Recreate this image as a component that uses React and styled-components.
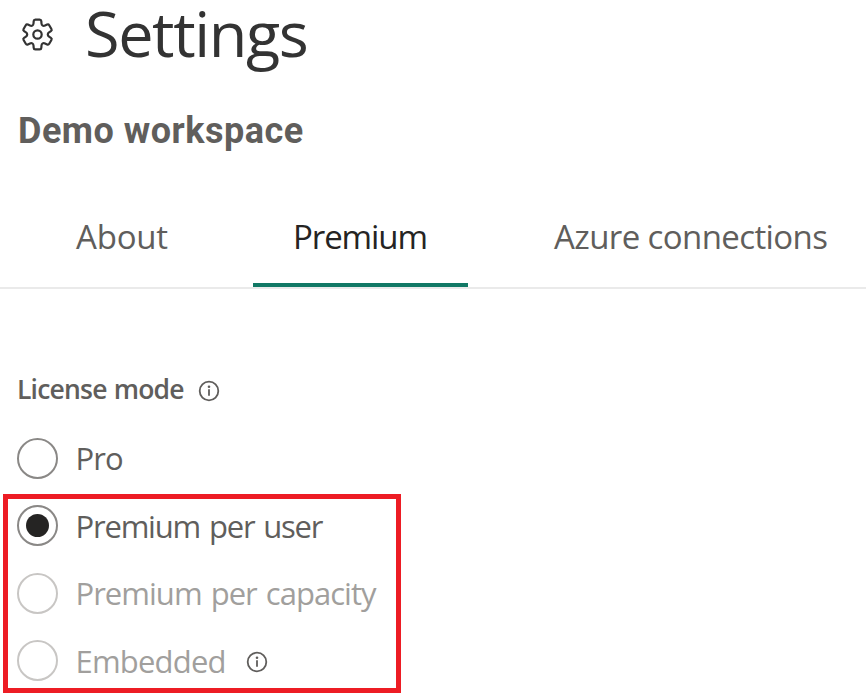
import React from 'react';
import styled, { createGlobalStyle } from 'styled-components';

const GlobalStyle = createGlobalStyle`
  *, *::before, *::after { box-sizing: border-box; }
  body {
    margin: 0;
    background: #fff;
    font-family: "Open Sans", "Noto Sans", sans-serif;
  }
`;

const Panel = styled.main`
  display: flex;
  flex-direction: column;
  height: 700px;
`;

const Header = styled.header`
  display: flex;
  align-items: flex-start;
  height: 111px;
  padding-left: 21px;
  gap: 31px;
`;

const GearSvg = styled.svg`
  flex: none;
  width: 33px;
  height: 33px;
  margin-top: 18px;
  fill: none;
  stroke: #333;
  stroke-width: 2.2;
  stroke-linejoin: round;
`;

const Title = styled.h1`
  margin: 0;
  color: #333;
  font-size: 63px;
  font-weight: 400;
  line-height: 65px;
  letter-spacing: -1.4px;
`;

const Workspace = styled.h2`
  margin: 0;
  padding-left: 18px;
  height: 85px;
  color: #605e5c;
  font-family: Roboto, sans-serif;
  font-size: 36px;
  font-weight: 700;
  line-height: 40px;
  letter-spacing: 0.5px;
`;

const TabBar = styled.nav`
  display: flex;
  gap: 45px;
  height: 93px;
  padding-left: 35px;
  border-bottom: 2px solid #eaeaea;
`;

const Tab = styled.a`
  flex: none;
  width: ${(p) => p.$width}px;
  padding-left: ${(p) => (p.$active ? 40 : 41)}px;
  border-bottom: 4px solid ${(p) => (p.$active ? '#117865' : 'transparent')};
  color: ${(p) => (p.$active ? '#252423' : '#605e5c')};
  font-size: 33px;
  line-height: 82px;
  letter-spacing: ${(p) => p.$tracking}px;
  white-space: nowrap;
`;

const Section = styled.section`
  padding: 79px 0 0 17px;
`;

const SectionTitle = styled.div`
  display: flex;
  align-items: center;
  gap: 14px;
  height: 41px;
`;

const Legend = styled.h3`
  margin: 0;
  padding-top: 2px;
  color: #605e5c;
  font-size: 26.5px;
  font-weight: 600;
  line-height: 41px;
  letter-spacing: -0.8px;
  word-spacing: 1px;
`;

const InfoSvg = styled.svg`
  flex: none;
  width: 22px;
  height: 22px;
  margin-top: ${(p) => p.$drop}px;
  fill: none;
  stroke: #605e5c;
  stroke-width: 1.8;
`;

const Options = styled.div`
  display: grid;
  grid-auto-rows: 67.5px;
  padding-top: 15.5px;
`;

const Option = styled.label`
  display: flex;
  align-items: center;
  color: ${(p) => (p.$disabled ? '#a19f9d' : '#605e5c')};
`;

const Radio = styled.span`
  display: grid;
  place-items: center;
  flex: none;
  width: 41px;
  height: 41px;
  margin-right: 17.5px;
  border: 2px solid ${(p) => (p.$disabled ? '#c8c6c4' : '#8a8886')};
  border-radius: 50%;
`;

const Dot = styled.span`
  width: 23px;
  height: 23px;
  border-radius: 50%;
  background: #252423;
`;

const OptionText = styled.span`
  margin-right: 20.5px;
  font-size: 31px;
  line-height: 44px;
  letter-spacing: ${(p) => p.$tracking}px;
  word-spacing: 2px;
  white-space: nowrap;
`;

const Highlight = styled.div`
  position: absolute;
  left: 3px;
  top: 494px;
  width: 398px;
  height: 199px;
  border: 5px solid #ed1c24;
  pointer-events: none;
`;

// Outline of one upward tooth, repeated every 60 degrees with softened corners.
const TOOTH = [[-4.1, -9.5], [-3.7, -14.8], [3.7, -14.8], [4.1, -9.5]];

function gearPath() {
  const pts = [];
  for (let k = 0; k < 6; k += 1) {
    const a = (k * Math.PI) / 3;
    TOOTH.forEach(([x, y]) => {
      pts.push([x * Math.cos(a) - y * Math.sin(a), x * Math.sin(a) + y * Math.cos(a)]);
    });
  }
  const toward = (p, q, r) => {
    const d = Math.hypot(q[0] - p[0], q[1] - p[1]);
    const t = Math.min(r, d / 2) / d;
    return [p[0] + (q[0] - p[0]) * t, p[1] + (q[1] - p[1]) * t].map((n) => n.toFixed(2));
  };
  return `${pts
    .map((p, i) => {
      const prev = pts[(i + pts.length - 1) % pts.length];
      const next = pts[(i + 1) % pts.length];
      return `${i ? 'L' : 'M'}${toward(p, prev, 1.5)} Q${p.map((n) => n.toFixed(2))} ${toward(p, next, 1.5)}`;
    })
    .join(' ')}Z`;
}

const GEAR = gearPath();

const GearIcon = () => (
  <GearSvg viewBox="-16.5 -16.5 33 33" aria-hidden="true">
    <path d={GEAR} />
    <circle r="4.2" />
  </GearSvg>
);

const InfoIcon = ({ drop }) => (
  <InfoSvg viewBox="0 0 22 22" $drop={drop} aria-hidden="true">
    <circle cx="11" cy="11" r="9.3" />
    <path d="M11 9.3V15.8" />
    <circle cx="11" cy="6.7" r="1.3" fill="#605e5c" stroke="none" />
  </InfoSvg>
);

const tabs = [
  { label: 'About', width: 173, tracking: -0.2 },
  { label: 'Premium', width: 215, tracking: -1.1, active: true },
  { label: 'Azure connections', width: 353, tracking: -0.6 },
];

const options = [
  { label: 'Pro', tracking: -0.9 },
  { label: 'Premium per user', tracking: -1.2, checked: true },
  { label: 'Premium per capacity', tracking: -0.98, disabled: true },
  { label: 'Embedded', tracking: -0.8, disabled: true, info: true },
];

export default function App() {
  return (
    <Panel>
      <GlobalStyle />
      <Header>
        <GearIcon />
        <Title>Settings</Title>
      </Header>
      <Workspace>Demo workspace</Workspace>
      <TabBar>
        {tabs.map((t) => (
          <Tab key={t.label} $width={t.width} $tracking={t.tracking} $active={t.active}>
            {t.label}
          </Tab>
        ))}
      </TabBar>
      <Section>
        <SectionTitle>
          <Legend>License mode</Legend>
          <InfoIcon drop={5} />
        </SectionTitle>
        <Options>
          {options.map((o) => (
            <Option key={o.label} $disabled={o.disabled}>
              <Radio $disabled={o.disabled}>{o.checked && <Dot />}</Radio>
              <OptionText $tracking={o.tracking}>{o.label}</OptionText>
              {o.info && <InfoIcon drop={2} />}
            </Option>
          ))}
        </Options>
      </Section>
      <Highlight />
    </Panel>
  );
}
